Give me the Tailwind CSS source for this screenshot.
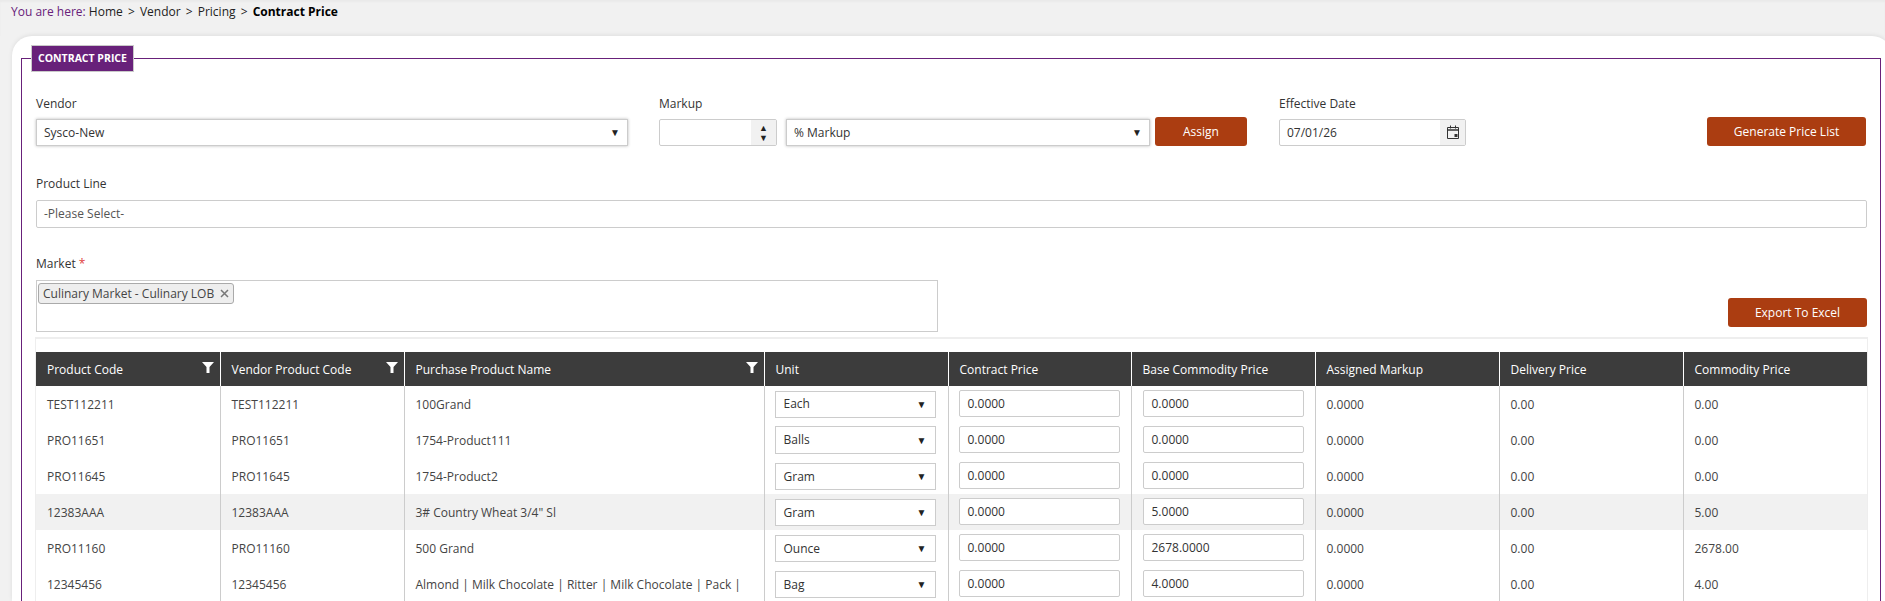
<!DOCTYPE html>
<html>
<head>
<meta charset="utf-8">
<script src="https://cdn.jsdelivr.net/npm/@tailwindcss/browser@4"></script>
<title>Contract Price</title>
</head>
<body class="bg-[#f1f1f1] font-['Open_Sans',sans-serif] text-[12px] text-[#444] h-[601px] overflow-hidden">
<div class="h-[36px] pl-[11px] pt-[3px] leading-[17px] text-[12px] text-[#222] shadow-[inset_0_2px_2px_rgba(0,0,0,0.03)]"><span class="text-[#68217a]">You are here:</span> Home <span class="mx-[2px]">&gt;</span> Vendor <span class="mx-[2px]">&gt;</span> Pricing <span class="mx-[2px]">&gt;</span> <b class="font-bold text-black">Contract Price</b></div>
<main class="ml-[12px] mr-[-7px] bg-white rounded-t-[20px] h-[565px] pl-[9px] pr-[11px] pt-[9px] overflow-hidden shadow-[0_-1px_4px_rgba(0,0,0,0.08)]">
<fieldset class="border border-[#68217a] pl-[14px] pr-[13px] h-[600px] min-w-0">
<legend class="ml-[-5px] mr-auto h-[27px] w-[103px] bg-[#68217a] border border-[#c9c9c9] text-white text-[10.5px] font-bold text-center leading-[25px]">CONTRACT PRICE</legend>

<div class="flex items-start mt-[23px] h-[81px]">
  <div class="w-[623px] shrink-0">
    <label class="block leading-[18px] mb-[6px] text-[#333]">Vendor</label>
    <div class="h-[27px] w-[592px] bg-white border border-[#ccc] shadow-[0_0_3px_#bbb] flex items-center justify-between px-[7px] text-[#333]"><span>Sysco-New</span><span class="text-[10px] text-[#222]">▼</span></div>
  </div>
  <div class="w-[620px] shrink-0">
    <label class="block leading-[18px] mb-[4px] text-[#333]">Markup</label>
    <div class="flex items-start">
      <div class="mt-[2px] h-[27px] w-[118px] border border-[#ccc] rounded-[2px] flex justify-end"><span class="w-[25px] bg-[#f1f1f1] flex flex-col items-center justify-center text-[9px] leading-[10px] text-[#222]"><span>▲</span><span>▼</span></span></div>
      <div class="mt-[2px] ml-[9px] h-[27px] w-[364px] bg-white border border-[#ccc] shadow-[0_0_3px_#bbb] flex items-center justify-between px-[7px] text-[#333]"><span>% Markup</span><span class="text-[10px] text-[#222]">▼</span></div>
      <button class="ml-[5px] h-[29px] w-[92px] bg-[#ab3d11] rounded-[3px] text-white">Assign</button>
    </div>
  </div>
  <div class="w-[428px] shrink-0">
    <label class="block leading-[18px] mb-[6px] text-[#333]">Effective Date</label>
    <div class="h-[27px] w-[187px] border border-[#ccc] rounded-[2px] flex items-center justify-between pl-[7px] text-[#333]"><span>07/01/26</span>
      <span class="w-[25px] h-full bg-[#f1f1f1] flex items-center justify-center">
        <svg width="14" height="15" viewBox="0 0 14 15" fill="none" stroke="#333"><path d="M1.5 2.5h11v11h-11z"/><path d="M1.5 5h11" stroke-width="1.5"/><path d="M4.5 .5v3M9.5 .5v3"/><rect x="8.5" y="9" width="3" height="3" fill="#333" stroke="none"/></svg>
      </span>
    </div>
  </div>
  <button class="h-[29px] w-[159px] bg-[#ab3d11] rounded-[3px] text-white mt-[22px]">Generate Price List</button>
</div>

<label class="block leading-[18px] mb-[7px] mt-[-1px] text-[#333]">Product Line</label>
<div class="h-[28px] w-full border border-[#ccc] rounded-[2px] flex items-center px-[7px] text-[#555]">-Please Select-</div>

<label class="block leading-[18px] mt-[27px] mb-[7px] text-[#333]">Market <span class="text-[#e04040]">*</span></label>
<div class="flex items-start justify-between h-[57px]">
  <div class="w-[902px] h-[52px] border border-[#ccc] pt-[2px] pl-[1px]">
    <span class="inline-flex items-center h-[21px] px-[4px] bg-[#eee] border border-[#aaa] rounded-[3px] text-[#444]">Culinary Market - Culinary LOB<svg class="ml-[6px]" width="9" height="9" viewBox="0 0 9 9" stroke="#777" stroke-width="1.5"><path d="M1 1l7 7M8 1l-7 7"/></svg></span>
  </div>
  <button class="mt-[18px] h-[29px] w-[139px] bg-[#ab3d11] rounded-[3px] text-white">Export To Excel</button>
</div>

<div class="border-t-2 border-x border-[#eee] pt-[13px] mx-[-1px]">
<table class="w-full table-fixed border-collapse [&_th]:pt-[2px] [&_td:not(:has(div))]:pt-[1px]">
  <colgroup>
    <col class="w-[184px]"><col class="w-[184px]"><col class="w-[360px]"><col class="w-[184px]"><col class="w-[183px]"><col class="w-[184px]"><col class="w-[184px]"><col class="w-[184px]"><col>
  </colgroup>
  <thead>
    <tr class="bg-[#3c3c3c] text-white h-[34px] text-left">
      <th class="font-normal pl-[11px] border-r border-white relative">Product Code<svg class="absolute right-[6px] top-[10px]" width="12" height="11" viewBox="0 0 12 11" fill="#fff"><path d="M0 0h12L7.5 5V11L4.5 11V5z"/></svg></th>
      <th class="font-normal pl-[11px] border-r border-white relative">Vendor Product Code<svg class="absolute right-[6px] top-[10px]" width="12" height="11" viewBox="0 0 12 11" fill="#fff"><path d="M0 0h12L7.5 5V11L4.5 11V5z"/></svg></th>
      <th class="font-normal pl-[11px] border-r border-white relative">Purchase Product Name<svg class="absolute right-[6px] top-[10px]" width="12" height="11" viewBox="0 0 12 11" fill="#fff"><path d="M0 0h12L7.5 5V11L4.5 11V5z"/></svg></th>
      <th class="font-normal pl-[11px] border-r border-white">Unit</th>
      <th class="font-normal pl-[11px] border-r border-white">Contract Price</th>
      <th class="font-normal pl-[11px] border-r border-white">Base Commodity Price</th>
      <th class="font-normal pl-[11px] border-r border-white">Assigned Markup</th>
      <th class="font-normal pl-[11px] border-r border-white">Delivery Price</th>
      <th class="font-normal pl-[11px]">Commodity Price</th>
    </tr>
  </thead>
  <tbody>
    <tr class="h-[36px]">
      <td class="pl-[11px] border-r border-[#ccc]">TEST112211</td><td class="pl-[11px] border-r border-[#ccc]">TEST112211</td><td class="pl-[11px] border-r border-[#ccc]">100Grand</td>
      <td class="pl-[10px] border-r border-[#ccc]"><div class="h-[27px] w-[161px] bg-white border border-[#ccc] flex items-center justify-between pl-[8px] pr-[8px] text-[#333]"><span>Each</span><span class="text-[10px] text-[#222]">▼</span></div></td>
      <td class="pl-[10px] border-r border-[#ccc]"><div class="h-[27px] w-[161px] mb-[1px] bg-white border border-[#ccc] rounded-[2px] flex items-center pl-[8px] text-[#333]">0.0000</div></td>
      <td class="pl-[11px] border-r border-[#ccc]"><div class="h-[27px] w-[161px] mb-[1px] bg-white border border-[#ccc] rounded-[2px] flex items-center pl-[8px] text-[#333]">0.0000</div></td>
      <td class="pl-[11px] border-r border-[#ccc]">0.0000</td><td class="pl-[11px] border-r border-[#ccc]">0.00</td><td class="pl-[11px]">0.00</td>
    </tr>
    <tr class="h-[36px]">
      <td class="pl-[11px] border-r border-[#ccc]">PRO11651</td><td class="pl-[11px] border-r border-[#ccc]">PRO11651</td><td class="pl-[11px] border-r border-[#ccc]">1754-Product111</td>
      <td class="pl-[10px] border-r border-[#ccc]"><div class="h-[28px] w-[161px] bg-white border border-[#ccc] flex items-center justify-between pl-[8px] pr-[8px] text-[#333]"><span>Balls</span><span class="text-[10px] text-[#222]">▼</span></div></td>
      <td class="pl-[10px] border-r border-[#ccc]"><div class="h-[27px] w-[161px] mb-[1px] bg-white border border-[#ccc] rounded-[2px] flex items-center pl-[8px] text-[#333]">0.0000</div></td>
      <td class="pl-[11px] border-r border-[#ccc]"><div class="h-[27px] w-[161px] mb-[1px] bg-white border border-[#ccc] rounded-[2px] flex items-center pl-[8px] text-[#333]">0.0000</div></td>
      <td class="pl-[11px] border-r border-[#ccc]">0.0000</td><td class="pl-[11px] border-r border-[#ccc]">0.00</td><td class="pl-[11px]">0.00</td>
    </tr>
    <tr class="h-[36px]">
      <td class="pl-[11px] border-r border-[#ccc]">PRO11645</td><td class="pl-[11px] border-r border-[#ccc]">PRO11645</td><td class="pl-[11px] border-r border-[#ccc]">1754-Product2</td>
      <td class="pl-[10px] border-r border-[#ccc]"><div class="h-[27px] w-[161px] mt-[1px] bg-white border border-[#ccc] flex items-center justify-between pl-[8px] pr-[8px] text-[#333]"><span>Gram</span><span class="text-[10px] text-[#222]">▼</span></div></td>
      <td class="pl-[10px] border-r border-[#ccc]"><div class="h-[27px] w-[161px] mb-[1px] bg-white border border-[#ccc] rounded-[2px] flex items-center pl-[8px] text-[#333]">0.0000</div></td>
      <td class="pl-[11px] border-r border-[#ccc]"><div class="h-[27px] w-[161px] mb-[1px] bg-white border border-[#ccc] rounded-[2px] flex items-center pl-[8px] text-[#333]">0.0000</div></td>
      <td class="pl-[11px] border-r border-[#ccc]">0.0000</td><td class="pl-[11px] border-r border-[#ccc]">0.00</td><td class="pl-[11px]">0.00</td>
    </tr>
    <tr class="h-[36px] bg-[#f1f1f1]">
      <td class="pl-[11px] border-r border-[#ccc]">12383AAA</td><td class="pl-[11px] border-r border-[#ccc]">12383AAA</td><td class="pl-[11px] border-r border-[#ccc]">3# Country Wheat 3/4" Sl</td>
      <td class="pl-[10px] border-r border-[#ccc]"><div class="h-[27px] w-[161px] mt-[1px] bg-white border border-[#ccc] flex items-center justify-between pl-[8px] pr-[8px] text-[#333]"><span>Gram</span><span class="text-[10px] text-[#222]">▼</span></div></td>
      <td class="pl-[10px] border-r border-[#ccc]"><div class="h-[27px] w-[161px] mb-[1px] bg-white border border-[#ccc] rounded-[2px] flex items-center pl-[8px] text-[#333]">0.0000</div></td>
      <td class="pl-[11px] border-r border-[#ccc]"><div class="h-[27px] w-[161px] mb-[1px] bg-white border border-[#ccc] rounded-[2px] flex items-center pl-[8px] text-[#333]">5.0000</div></td>
      <td class="pl-[11px] border-r border-[#ccc]">0.0000</td><td class="pl-[11px] border-r border-[#ccc]">0.00</td><td class="pl-[11px]">5.00</td>
    </tr>
    <tr class="h-[36px]">
      <td class="pl-[11px] border-r border-[#ccc]">PRO11160</td><td class="pl-[11px] border-r border-[#ccc]">PRO11160</td><td class="pl-[11px] border-r border-[#ccc]">500 Grand</td>
      <td class="pl-[10px] border-r border-[#ccc]"><div class="h-[27px] w-[161px] mt-[1px] bg-white border border-[#ccc] flex items-center justify-between pl-[8px] pr-[8px] text-[#333]"><span>Ounce</span><span class="text-[10px] text-[#222]">▼</span></div></td>
      <td class="pl-[10px] border-r border-[#ccc]"><div class="h-[27px] w-[161px] mb-[1px] bg-white border border-[#ccc] rounded-[2px] flex items-center pl-[8px] text-[#333]">0.0000</div></td>
      <td class="pl-[11px] border-r border-[#ccc]"><div class="h-[27px] w-[161px] mb-[1px] bg-white border border-[#ccc] rounded-[2px] flex items-center pl-[8px] text-[#333]">2678.0000</div></td>
      <td class="pl-[11px] border-r border-[#ccc]">0.0000</td><td class="pl-[11px] border-r border-[#ccc]">0.00</td><td class="pl-[11px]">2678.00</td>
    </tr>
    <tr class="h-[36px]">
      <td class="pl-[11px] border-r border-[#ccc]">12345456</td><td class="pl-[11px] border-r border-[#ccc]">12345456</td><td class="pl-[11px] border-r border-[#ccc] whitespace-nowrap overflow-hidden">Almond | Milk Chocolate | Ritter | Milk Chocolate | Pack |</td>
      <td class="pl-[10px] border-r border-[#ccc]"><div class="h-[27px] w-[161px] mt-[1px] bg-white border border-[#ccc] flex items-center justify-between pl-[8px] pr-[8px] text-[#333]"><span>Bag</span><span class="text-[10px] text-[#222]">▼</span></div></td>
      <td class="pl-[10px] border-r border-[#ccc]"><div class="h-[27px] w-[161px] mb-[1px] bg-white border border-[#ccc] rounded-[2px] flex items-center pl-[8px] text-[#333]">0.0000</div></td>
      <td class="pl-[11px] border-r border-[#ccc]"><div class="h-[27px] w-[161px] mb-[1px] bg-white border border-[#ccc] rounded-[2px] flex items-center pl-[8px] text-[#333]">4.0000</div></td>
      <td class="pl-[11px] border-r border-[#ccc]">0.0000</td><td class="pl-[11px] border-r border-[#ccc]">0.00</td><td class="pl-[11px]">4.00</td>
    </tr>
  </tbody>
</table>
</div>
</fieldset>
</main>
</body>
</html>
